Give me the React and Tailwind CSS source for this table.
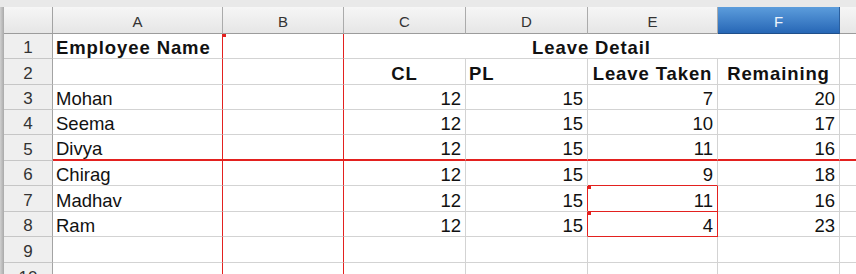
import React from "react";

const RED = "border-[#e3211f]";

const cols = [
  { key: "A", w: "w-[170px]" },
  { key: "B", w: "w-[121px]" },
  { key: "C", w: "w-[122px]" },
  { key: "D", w: "w-[122px]" },
  { key: "E", w: "w-[130px]" },
  { key: "F", w: "w-[122px]" },
  { key: "G", w: "w-[122px]" },
];

const heights = ["h-[25px]", "h-[26px]", "h-[25px]", "h-[25px]", "h-[26px]", "h-[25px]", "h-[26px]", "h-[25px]", "h-[26px]", "h-[26px]"];

const people = [
  ["Mohan", 12, 15, 7, 20],
  ["Seema", 12, 15, 10, 17],
  ["Divya", 12, 15, 11, 16],
  ["Chirag", 12, 15, 9, 18],
  ["Madhav", 12, 15, 11, 16],
  ["Ram", 12, 15, 4, 23],
];

const Marker = () => (
  <span className="absolute left-0 top-0 h-[3px] w-[3px] bg-[#e3211f]" />
);

// borders for a normal body cell, picked by column and row
function borderFor(col, row) {
  let right = "border-r border-r-[#d3d3d3]";
  let bottom = "border-b border-b-[#d3d3d3]";
  if (col === "A" || col === "B") right = "border-r border-r-[#e3211f]";
  if ((col === "D" || col === "E") && (row === 7 || row === 8)) right = "border-r border-r-[#e3211f]";
  if (col === "E" && (row === 6 || row === 7 || row === 8)) bottom = "border-b border-b-[#e3211f]";
  if (row === 5) bottom = "border-b-2 border-b-[#e3211f]";
  return `${right} ${bottom}`;
}

function Cell({ col, row, children, align = "right", bold = false, marker = false }) {
  const justify =
    align === "left" ? "justify-start pl-[3px]" : align === "center" ? "justify-center" : "justify-end pr-[4px]";
  return (
    <div
      className={`relative flex shrink-0 items-end overflow-hidden whitespace-nowrap ${col.w} ${justify} ${borderFor(col.key, row)} ${bold ? "font-bold tracking-[0.9px]" : ""}`}
    >
      {marker && <Marker />}
      <span className="leading-[20px]">{children}</span>
    </div>
  );
}

function RowHead({ n }) {
  return (
    <div className="flex w-[49px] shrink-0 items-end justify-center border-r border-b border-r-[#a3a3a3] border-b-[#c6c6c6] bg-[#efefef] text-[17px] leading-[20px] text-[#333]">
      {n}
    </div>
  );
}

function BodyRow({ n, children }) {
  return (
    <div className={`flex ${heights[n - 1]}`}>
      <RowHead n={n} />
      {children}
    </div>
  );
}

export default function App() {
  const c = Object.fromEntries(cols.map((x) => [x.key, x]));
  return (
    <div className="h-[274px] w-[856px] overflow-hidden bg-white text-[18.5px] text-[#111] [font-family:'Liberation_Sans',Arial,sans-serif]">
      <div className="h-[7px] bg-[#e9e9e9]" />
      <div className="flex">
        <div className="w-[4px] shrink-0 bg-gradient-to-r from-[#d0d0d0] to-[#a9a9a9]" />
        <div className="flex flex-col">
          {/* column headers */}
          <div className="flex h-[27px] text-[15px] text-[#333]">
            <div className="w-[49px] shrink-0 border-r border-b border-r-[#a3a3a3] border-b-[#9c9c9c] bg-gradient-to-b from-[#f6f6f6] to-[#e6e6e6]" />
            {cols.map((x) =>
              x.key === "F" ? (
                <div
                  key={x.key}
                  className={`flex shrink-0 items-end justify-center pb-[1px] ${x.w} border-r border-b border-r-[#2b5f9e] border-b-[#1f4f8a] bg-gradient-to-b from-[#5c9ddc] to-[#2767b6] text-[#eef4fb]`}
                >
                  <span className="leading-[20px]">{x.key}</span>
                </div>
              ) : (
                <div
                  key={x.key}
                  className={`flex shrink-0 items-end justify-center pb-[1px] ${x.w} border-r border-b border-r-[#ababab] border-b-[#9c9c9c] bg-gradient-to-b from-[#f6f6f6] to-[#e6e6e6]`}
                >
                  <span className="leading-[20px]">{x.key === "G" ? "" : x.key}</span>
                </div>
              )
            )}
          </div>

          {/* row 1 */}
          <BodyRow n={1}>
            <Cell col={c.A} row={1} align="left" bold>Employee Name</Cell>
            <Cell col={c.B} row={1} marker />
            <div className="flex w-[496px] shrink-0 items-end justify-center border-r border-b border-[#d3d3d3] font-bold tracking-[0.9px]">
              <span className="leading-[20px]">Leave Detail</span>
            </div>
            <Cell col={c.G} row={1} />
          </BodyRow>

          {/* row 2 */}
          <BodyRow n={2}>
            <Cell col={c.A} row={2} />
            <Cell col={c.B} row={2} />
            <Cell col={c.C} row={2} align="center" bold>CL</Cell>
            <Cell col={c.D} row={2} align="left" bold>PL</Cell>
            <Cell col={c.E} row={2} align="center" bold>Leave Taken</Cell>
            <Cell col={c.F} row={2} align="center" bold>Remaining</Cell>
            <Cell col={c.G} row={2} />
          </BodyRow>

          {people.map(([name, cl, pl, taken, left], i) => {
            const n = i + 3;
            return (
              <BodyRow key={name} n={n}>
                <Cell col={c.A} row={n} align="left">{name}</Cell>
                <Cell col={c.B} row={n} />
                <Cell col={c.C} row={n}>{cl}</Cell>
                <Cell col={c.D} row={n}>{pl}</Cell>
                <Cell col={c.E} row={n} marker={n === 7 || n === 8}>{taken}</Cell>
                <Cell col={c.F} row={n}>{left}</Cell>
                <Cell col={c.G} row={n} />
              </BodyRow>
            );
          })}

          {[9, 10].map((n) => (
            <BodyRow key={n} n={n}>
              {cols.map((x) => (
                <Cell key={x.key} col={x} row={n} />
              ))}
            </BodyRow>
          ))}
        </div>
      </div>
    </div>
  );
}
